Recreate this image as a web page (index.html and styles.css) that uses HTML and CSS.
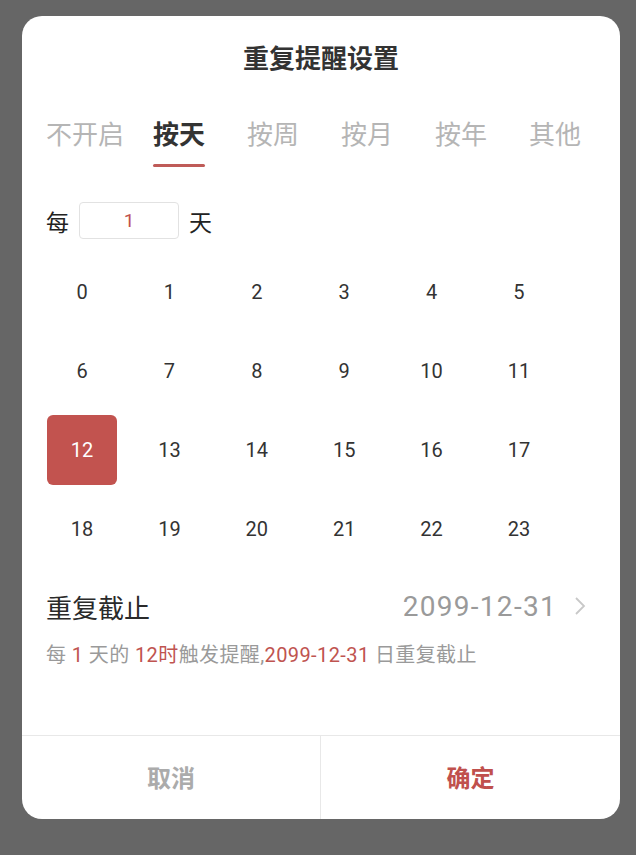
FILE: index.html
```html
<!DOCTYPE html>
<html lang="zh">
<head>
<meta charset="utf-8">
<link rel="stylesheet" href="styles.css">
</head>
<body>
<div class="dialog">
  <div class="title">重复提醒设置</div>
  <div class="tabs">
    <div class="tab">不开启</div>
    <div class="tab active">按天</div>
    <div class="tab">按周</div>
    <div class="tab">按月</div>
    <div class="tab">按年</div>
    <div class="tab">其他</div>
  </div>
  <div class="every">
    <span class="every-label">每</span>
    <div class="num-input">1</div>
    <span class="every-label">天</span>
  </div>
  <div class="hours">
    <div class="hour">0</div><div class="hour">1</div><div class="hour">2</div><div class="hour">3</div><div class="hour">4</div><div class="hour">5</div>
    <div class="hour">6</div><div class="hour">7</div><div class="hour">8</div><div class="hour">9</div><div class="hour">10</div><div class="hour">11</div>
    <div class="hour selected">12</div><div class="hour">13</div><div class="hour">14</div><div class="hour">15</div><div class="hour">16</div><div class="hour">17</div>
    <div class="hour">18</div><div class="hour">19</div><div class="hour">20</div><div class="hour">21</div><div class="hour">22</div><div class="hour">23</div>
  </div>
  <div class="end-row">
    <span class="end-label">重复截止</span>
    <span class="end-value">2099-12-31
      <svg class="chev" width="14" height="20" viewBox="0 0 14 20"><polyline points="3,2 11,10 3,18" fill="none" stroke="#c8c8c8" stroke-width="1.8"/></svg>
    </span>
  </div>
  <div class="summary">每 <em>1</em> 天的 <em>12时</em>触发提醒,<em>2099-12-31</em> 日重复截止</div>
  <div class="footer">
    <div class="btn cancel">取消</div>
    <div class="btn ok">确定</div>
  </div>
</div>
</body>
</html>
```

FILE: styles.css
```css
html, body {
  margin: 0;
  padding: 0;
}
body {
  background: #666666;
  height: 855px;
  overflow: hidden;
  font-family: Roboto, "Noto Sans CJK SC", sans-serif;
  padding-top: 16px;
  box-sizing: border-box;
}
.dialog {
  margin-left: 22px;
  width: 598px;
  height: 803px;
  background: #ffffff;
  border-radius: 20px;
  overflow: hidden;
  display: flex;
  flex-direction: column;
}
.title {
  margin-top: 24px;
  height: 34px;
  line-height: 34px;
  text-align: center;
  font-size: 26px;
  font-weight: 700;
  color: #333;
  font-family: "Noto Sans CJK SC", sans-serif;
}
.tabs {
  margin-top: 41px;
  margin-left: 16px;
  display: grid;
  grid-template-columns: repeat(6, 94px);
}
.tab {
  position: relative;
  height: 36px;
  line-height: 36px;
  text-align: center;
  font-size: 26px;
  color: #b5b5b5;
  font-family: "Noto Sans CJK SC", sans-serif;
  padding-bottom: 16px;
}
.tab.active {
  color: #333;
  font-weight: 700;
}
.tab.active::after {
  content: "";
  position: absolute;
  left: 21px;
  right: 21px;
  bottom: 0;
  height: 3px;
  border-radius: 2px;
  background: #bf5b58;
}
.every {
  margin-top: 35px;
  padding-left: 24px;
  display: flex;
  align-items: center;
  gap: 10px;
}
.every-label {
  font-size: 23px;
  color: #222;
  font-family: "Noto Sans CJK SC", sans-serif;
}
.num-input {
  width: 98px;
  height: 35px;
  border: 1px solid #e2e2e2;
  border-radius: 4px;
  text-align: center;
  line-height: 35px;
  font-size: 19px;
  color: #c0504d;
}
.hours {
  margin-top: 18px;
  padding-left: 25px;
  display: grid;
  grid-template-columns: repeat(6, 70px);
  grid-auto-rows: 70px;
  column-gap: 17.4px;
  row-gap: 9px;
}
.hour {
  display: flex;
  align-items: center;
  justify-content: center;
  font-size: 20px;
  color: #333;
  border-radius: 6px;
}
.hour.selected {
  background: #c2534f;
  color: #fff;
}
.end-row {
  margin-top: 24px;
  padding: 0 33px 0 24px;
  height: 36px;
  display: flex;
  align-items: center;
  justify-content: space-between;
}
.end-label {
  font-size: 26px;
  color: #2a2a2a;
  font-family: "Noto Sans CJK SC", sans-serif;
}
.end-value {
  display: flex;
  align-items: center;
  gap: 16px;
  font-size: 28px;
  letter-spacing: 1.3px;
  color: #9a9a9a;
}
.summary {
  margin-top: 18px;
  padding-left: 24px;
  height: 26px;
  line-height: 26px;
  font-size: 20px;
  letter-spacing: 0.4px;
  color: #9a9a9a;
  font-family: Roboto, "Noto Sans CJK SC", sans-serif;
}
.summary em {
  font-style: normal;
  color: #bf5450;
}
.footer {
  margin-top: auto;
  height: 83px;
  border-top: 1px solid #e8e8e8;
  display: grid;
  grid-template-columns: 1fr 1fr;
}
.btn {
  display: flex;
  align-items: center;
  justify-content: center;
  font-size: 24px;
  font-weight: 700;
  font-family: "Noto Sans CJK SC", sans-serif;
  padding-bottom: 3px;
}
.cancel {
  color: #ababab;
  border-right: 1px solid #e8e8e8;
}
.ok {
  color: #c0504d;
}
```
